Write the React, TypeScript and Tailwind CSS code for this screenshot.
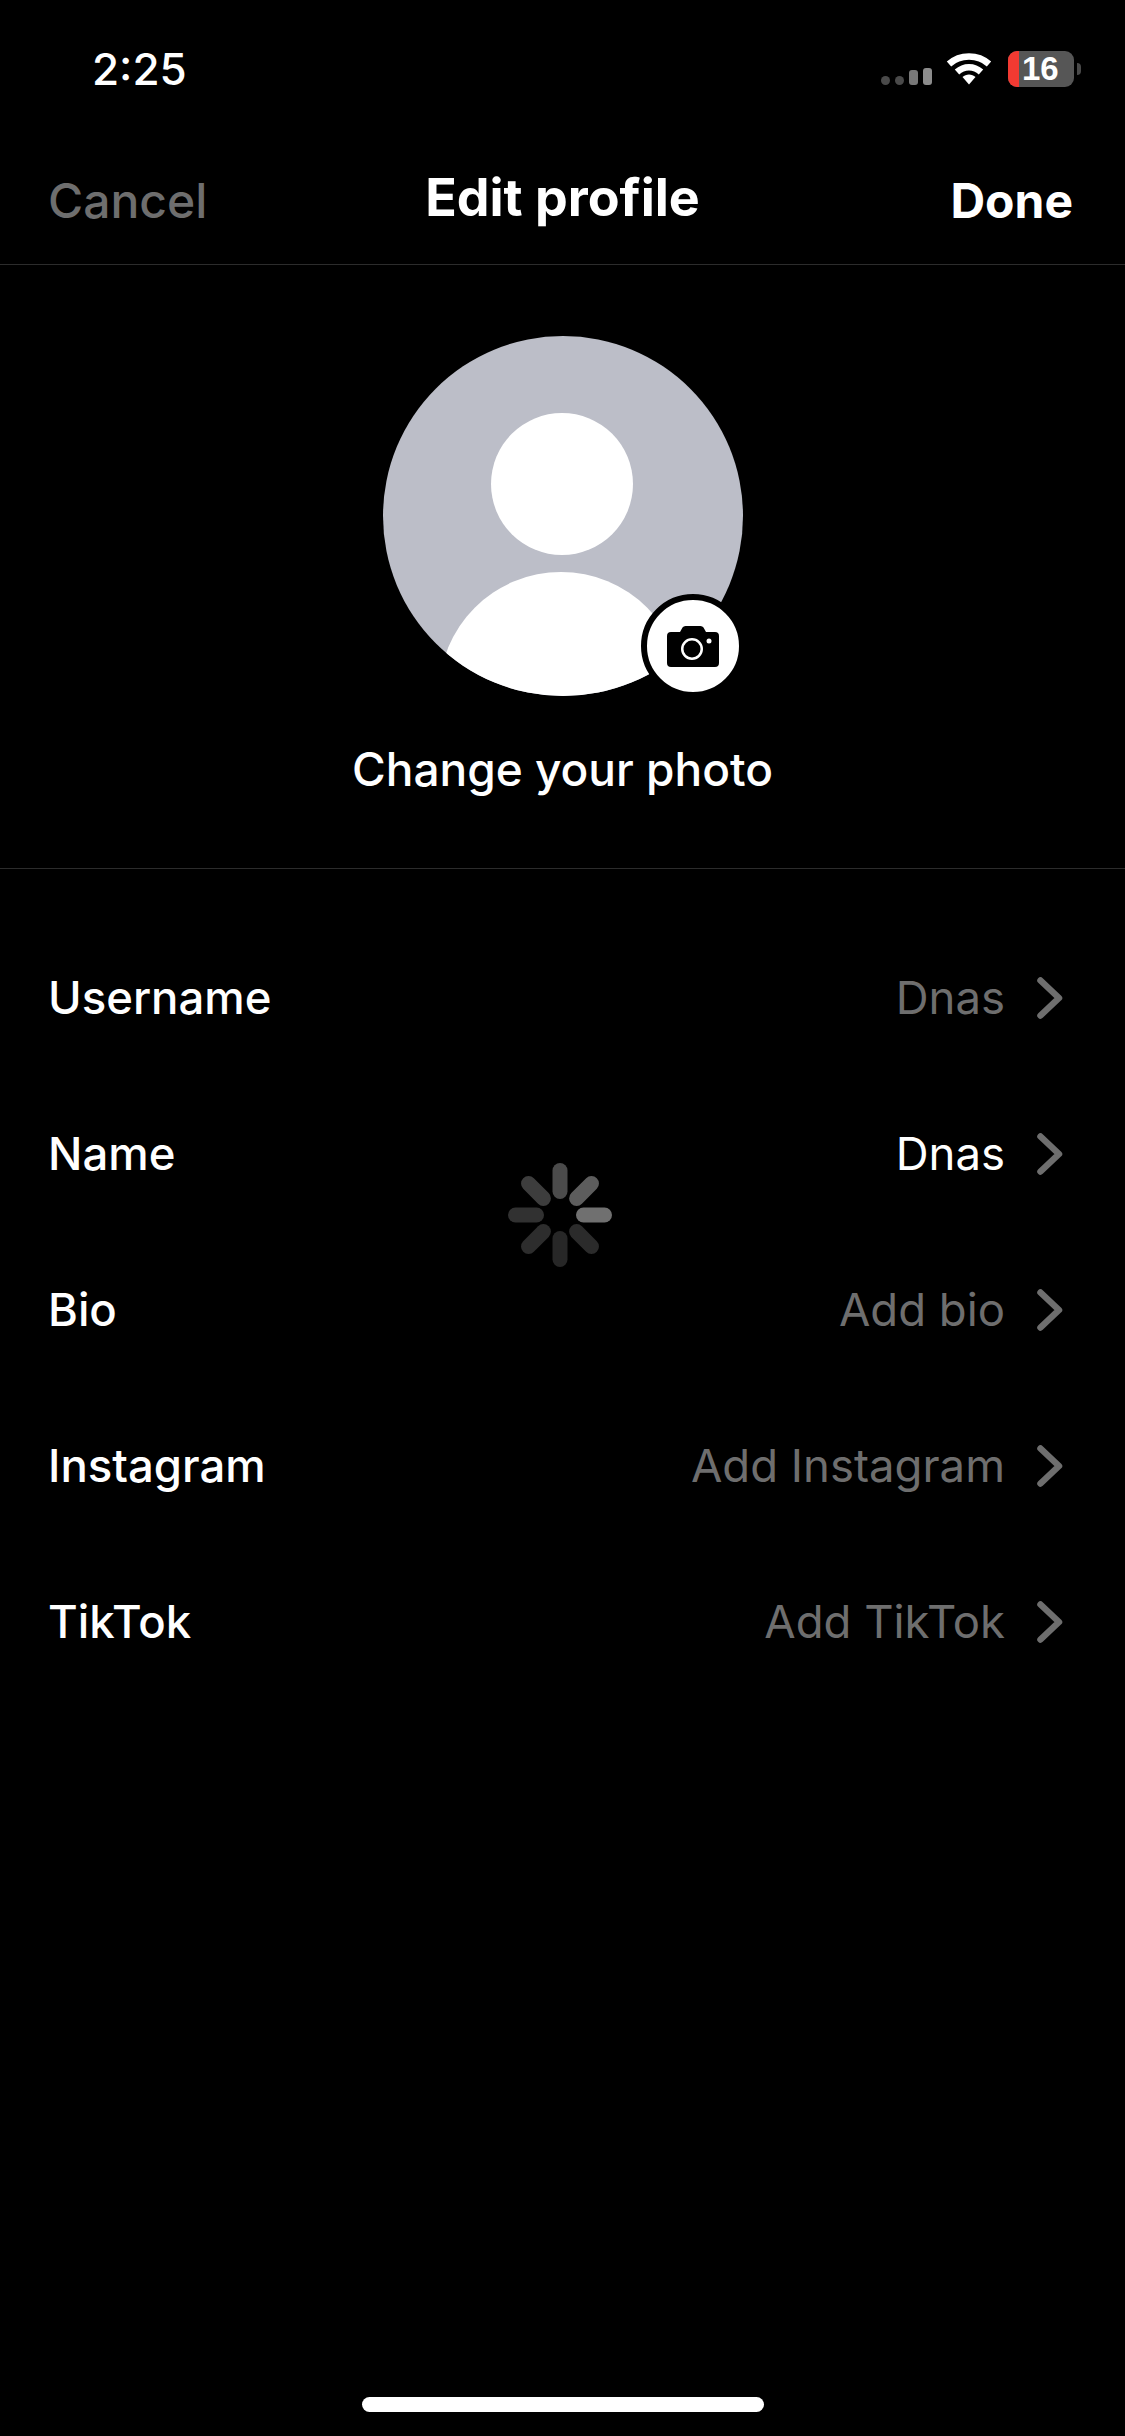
const rows = [
  { label: "Username", value: "Dnas", filled: false },
  { label: "Name", value: "Dnas", filled: true },
  { label: "Bio", value: "Add bio", filled: false },
  { label: "Instagram", value: "Add Instagram", filled: false },
  { label: "TikTok", value: "Add TikTok", filled: false },
];

const spokes = [
  { angle: 0, color: "#707070" },
  { angle: 45, color: "#2b2b2b" },
  { angle: 90, color: "#272727" },
  { angle: 135, color: "#2d2d2d" },
  { angle: 180, color: "#313131" },
  { angle: 225, color: "#3d3d3d" },
  { angle: 270, color: "#4b4b4b" },
  { angle: 315, color: "#5d5d5d" },
];

function Spinner() {
  return (
    <svg width="106" height="106" viewBox="0 0 106 106" className="absolute left-[507px] top-[1162px]">
      {spokes.map((s) => (
        <rect
          key={s.angle}
          x="69"
          y="45.5"
          width="36"
          height="15"
          rx="7.5"
          fill={s.color}
          transform={`rotate(${s.angle} 53 53)`}
        />
      ))}
    </svg>
  );
}

function StatusBar() {
  return (
    <div className="h-[110px] flex items-start justify-between pt-[51px] pl-[92px] pr-[44px]">
      <span className="text-[44px] leading-[36px] font-medium text-white">2:25</span>
      <div className="flex items-center">
        <div className="flex items-end gap-[5px] mt-[15px]">
          <div className="w-[9px] h-[9px] rounded-full bg-[#4a4a4a]" />
          <div className="w-[9px] h-[9px] rounded-full bg-[#4a4a4a]" />
          <div className="w-[9px] h-[15px] rounded-[3px] bg-[#787878]" />
          <div className="w-[9px] h-[17px] rounded-[3px] bg-[#8c8c8c]" />
        </div>
        <svg width="46" height="34" viewBox="0 0 46 34" className="ml-[14px] mt-[-2px]">
          <g fill="none" stroke="#fff" strokeWidth="6.5">
            <path d="M3 13 C14 3 32 3 43 13" />
            <path d="M11 21 C18 14.5 28 14.5 35 21" />
          </g>
          <path d="M16.5 26 C20 22.5 26 22.5 29.500 26 L23 33.500 Z" fill="#fff" />
        </svg>
        <div className="ml-[16px] w-[66px] h-[36px] rounded-[9px] bg-[#565656] flex">
          <div className="w-[11px] rounded-l-[9px] bg-[#f23a32]" />
          <span className="pl-[3px] text-[33px] leading-[36px] font-bold text-white font-['Liberation_Sans',sans-serif]">16</span>
        </div>
        <div className="ml-[3px] w-[4px] h-[12px] rounded-r-full bg-[#4a4a4a]" />
      </div>
    </div>
  );
}

function Row({ label, value, filled }: { label: string; value: string; filled: boolean }) {
  return (
    <div className="h-[156px] flex items-center justify-between pl-[48px] pr-[62px]">
      <span className="text-[45.5px] font-medium text-white">{label}</span>
      <div className="flex items-center gap-[32px]">
        <span className={filled ? "text-[45.5px] text-white" : "text-[45.5px] text-[#6e6e6e]"}>{value}</span>
        <svg width="26" height="42" viewBox="0 0 26 42" fill="none">
          <path d="M3.500 3.500 L22 21 L3.500 38.500" stroke="#6e6e6e" strokeWidth="6.500" strokeLinecap="round" strokeLinejoin="round" />
        </svg>
      </div>
    </div>
  );
}

export default function App() {
  return (
    <div className="relative w-[1125px] h-[2436px] bg-black flex flex-col overflow-hidden font-['Inter',sans-serif]">
      <StatusBar />

      <div className="h-[155px] border-b border-[#2c2c2c] grid grid-cols-[1fr_auto_1fr] items-start px-[48px] pt-[61px]">
        <span className="text-[48px] leading-[60px] font-medium text-[#6e6e6e]">Cancel</span>
        <span className="text-[52px] leading-[60px] font-bold text-white mt-[-3px]">Edit profile</span>
        <span className="text-[48px] leading-[60px] font-bold text-white text-right mr-[4px]">Done</span>
      </div>

      <div className="h-[604px] border-b border-[#2c2c2c] flex flex-col items-center pt-[71px]">
        <div className="relative w-[360px] h-[360px]">
          <svg width="360" height="360" viewBox="0 0 360 360">
            <defs>
              <clipPath id="avatar-clip">
                <circle cx="180" cy="180" r="180" />
              </clipPath>
            </defs>
            <circle cx="180" cy="180" r="180" fill="#bcbec8" />
            <g clipPath="url(#avatar-clip)">
              <circle cx="179" cy="148" r="71" fill="#fff" />
              <circle cx="178" cy="358" r="122" fill="#fff" />
            </g>
          </svg>
          <div className="absolute left-[258px] top-[258px] w-[104px] h-[104px] rounded-full bg-white border-[6px] border-black flex items-center justify-center">
            <svg width="52" height="41" viewBox="0 0 52 41">
              <path
                fillRule="evenodd"
                d="M4 6 H13 L15.500 1.500 Q16.500 0 18.500 0 H33.500 Q35.500 0 36.500 1.500 L39 6 H48 Q52 6 52 10 V37 Q52 41 48 41 H4 Q0 41 0 37 V10 Q0 6 4 6 Z M25 12 A11 11 0 1 0 25 34 A11 11 0 1 0 25 12 Z M25 14.500 A8.500 8.500 0 1 1 25 31.500 A8.500 8.500 0 1 1 25 14.500 Z"
                fill="#000"
              />
              <circle cx="42" cy="15" r="2.500" fill="#fff" />
            </svg>
          </div>
        </div>
        <span className="mt-[43px] text-[46px] leading-[60px] font-medium text-white">Change your photo</span>
      </div>

      <div className="pt-[51px] flex flex-col">
        {rows.map((r) => (
          <Row key={r.label} label={r.label} value={r.value} filled={r.filled} />
        ))}
      </div>

      <Spinner />

      <div className="mt-auto mb-[24px] self-center w-[402px] h-[15px] rounded-[8px] bg-white" />
    </div>
  );
}
